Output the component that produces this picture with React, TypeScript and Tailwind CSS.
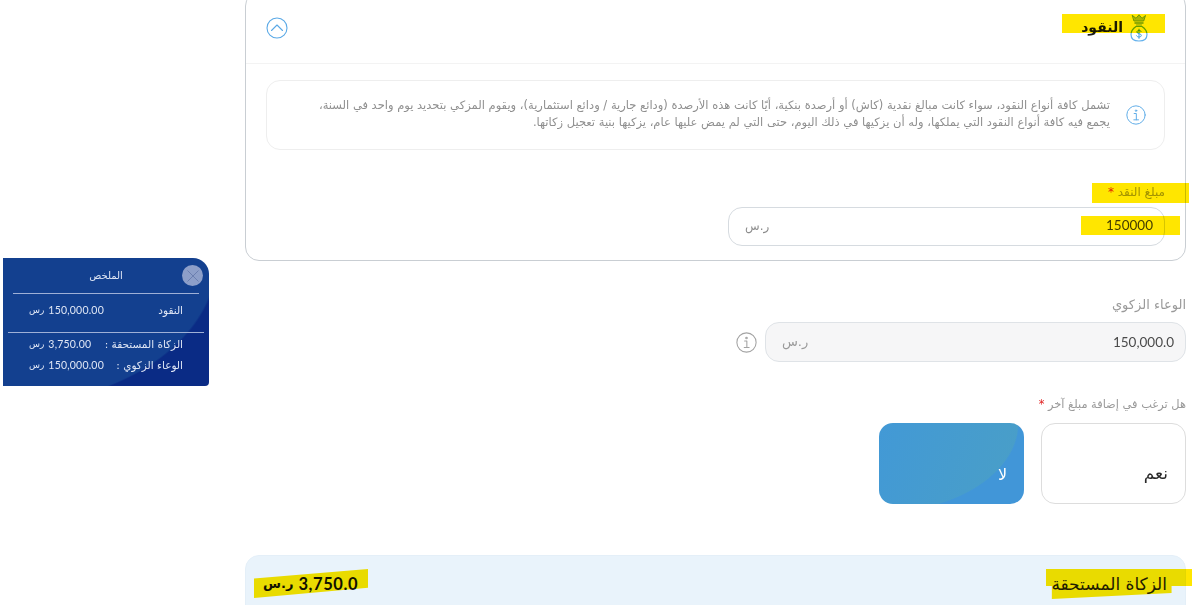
import React from "react";

const font = { fontFamily: '"DejaVu Sans", "Noto Sans", sans-serif' };

function InfoIcon({ color, size }: { color: string; size: number }) {
  return (
    <svg width={size} height={size} viewBox="0 0 24 24" fill="none" stroke={color} strokeWidth="1.2" strokeLinecap="round" strokeLinejoin="round" className="shrink-0">
      <circle cx="12" cy="12" r="11" />
      <circle cx="12" cy="6.8" r="0.9" />
      <path d="M9.8 10.2h2.6v7.6M9.4 17.8h5.6" />
    </svg>
  );
}

function BagIcon() {
  return (
    <svg width="20" height="28" viewBox="0 0 20 28" fill="none" strokeLinecap="round" strokeLinejoin="round" className="shrink-0">
      <path d="M3.500 1.500l3.500 2.800L10 .8l3 3.500 3.500-2.800-1.800 5.500H5.300z" fill="#a9c93c" stroke="#6ea81a" strokeWidth="1" />
      <path d="M6 9h8" stroke="#6ea81a" strokeWidth="1.500" />
      <path d="M7.500 11h5" stroke="#6ea81a" strokeWidth="1.200" />
      <path d="M7 12.500C4 14.500 2 17.500 2 20.500c0 4 3 6.500 8 6.500s8-2.500 8-6.500c0-3-2-6-5-8z" stroke="#62b0ec" strokeWidth="1.200" fill="#fff" fillOpacity="0.6" />
      <path d="M12.200 17.600c-.5-.8-1.200-1.100-2.200-1.100-1.200 0-2.100.6-2.100 1.500 0 2.300 4.400 1.100 4.400 3.400 0 1-.9 1.600-2.300 1.600-1.100 0-2-.4-2.400-1.200M10 15.200v9.200" stroke="#3f9de0" strokeWidth="1" />
    </svg>
  );
}

function Mark({ className }: { className: string }) {
  return <div className={"absolute bg-[#ffe600] mix-blend-multiply pointer-events-none " + className} />;
}

function SummaryRow({ label, value, className }: { label: string; value: string; className?: string }) {
  return (
    <div className={"flex justify-between items-center px-[26px] " + (className ?? "")}>
      <span>{label}</span>
      <span className="flex items-center gap-1" dir="ltr">
        <span className="text-[9px]">رس</span>
        <span className="font-['Lato'] text-[10.5px] tracking-[0.2px]">{value}</span>
      </span>
    </div>
  );
}

function Summary() {
  return (
    <aside dir="rtl" className="absolute left-[3px] top-[258px] w-[206px] h-[128px] rounded-tr-[16px] rounded-br-[4px] text-[#dfe6f5] text-[10.5px] bg-[radial-gradient(215px_148px_at_0_0,#13408f_99%,#0a2b85_100%)]">
      <div className="absolute left-[179px] top-[7px] size-[21px] rounded-full bg-[#8d9fc9] flex items-center justify-center">
        <svg width="14" height="14" viewBox="0 0 14 14" stroke="#6b7fb0" strokeWidth="1" fill="none"><path d="M1.500 1.500l11 11M12.500 1.500l-11 11" /></svg>
      </div>
      <div className="h-[36px] mx-[10px] border-b border-[#9fb0d6] flex items-center justify-center text-[10px]">الملخص</div>
      <SummaryRow label="النقود" value="150,000.00" className="h-[38px] pb-[4px]" />
      <div className="mx-[5px] border-t border-[#9fb0d6]" />
      <SummaryRow label="الزكاة المستحقة  :" value="3,750.00" className="h-[22px] pt-[2px]" />
      <SummaryRow label="الوعاء الزكوي  :" value="150,000.00" className="h-[20px] pt-[2px]" />
    </aside>
  );
}

export default function App() {
  return (
    <div className="relative w-[1200px] h-[605px] overflow-hidden bg-white" style={font}>
      <Summary />
      <main dir="rtl" className="ml-[245px] w-[941px] -mt-[8px]">
        <section className="h-[269px] border border-[#c9ced3] rounded-[14px]">
          <header className="relative h-[71px] border-b border-[#f3f3f3] flex items-center justify-between pr-[38px] pl-[20px]">
            <div className="flex items-center gap-[6px] -mr-[2px]">
              <BagIcon />
              <span className="text-[14px] font-bold text-[#1b1b1b] -mt-[1px]">النقود</span>
            </div>
            <svg width="22" height="22" viewBox="0 0 22 22" fill="none" stroke="#5aa9e6" strokeWidth="1.100" strokeLinecap="round" strokeLinejoin="round">
              <circle cx="11" cy="11" r="10" />
              <path d="M5.500 13.500L11 8l5.500 5.500" />
            </svg>
            <Mark className="right-[20px] top-[21px] w-[103px] h-[19px]" />
          </header>
          <div className="mx-[20px] mt-[16px] h-[70px] border border-[#eeeeee] rounded-[14px] flex items-center gap-[16px] pr-[18px]">
            <InfoIcon color="#62aee8" size={20} />
            <p className="pb-[3px] text-[11.5px] leading-[17px] text-[#8f8f8f] whitespace-nowrap">
              تشمل كافة أنواع النقود، سواء كانت مبالغ نقدية (كاش) أو أرصدة بنكية، أيًا كانت هذه الأرصدة (ودائع جارية / ودائع استثمارية)، ويقوم المزكي بتحديد يوم واحد في السنة،
              <br />
              يجمع فيه كافة أنواع النقود التي يملكها، وله أن يزكيها في ذلك اليوم، حتى التي لم يمض عليها عام، يزكيها بنية تعجيل زكاتها.
            </p>
          </div>
          <div className="relative mx-[20px] mt-[34px] text-[12px] leading-[16px] text-[#a3a3a3]">
            مبلغ النقد <span className="text-[#e02424]">*</span>
            <Mark className="-right-[24px] -top-[1px] w-[97px] h-[20px]" />
          </div>
          <div className="relative mx-[20px] mt-[7px] w-[437px] h-[39px] border border-[#d6dbe0] rounded-[14px] flex items-center justify-between px-[11px] pb-[2px]">
            <span className="font-['Lato'] text-[13.5px] text-[#444]">150000</span>
            <span className="text-[12px] text-[#8c8c8c] pl-[5px]">ر.س</span>
            <Mark className="-right-[16px] top-[8px] w-[99px] h-[19px]" />
          </div>
        </section>

        <label className="block mt-[35px] text-[13px] leading-[18px] text-[#9a9a9a]">الوعاء الزكوي</label>
        <div className="mt-[8px] flex items-center gap-[8px]">
          <div className="w-[421px] h-[40px] bg-[#f6f6f7] border border-[#dfe3e7] rounded-[14px] flex items-center justify-between px-[11px]">
            <span className="font-['Lato'] text-[13.5px] text-[#4a4a4a]">150,000.0</span>
            <span className="text-[13px] text-[#9a9a9a] pl-[5px]">ر.س</span>
          </div>
          <InfoIcon color="#a3a3a3" size={21} />
        </div>

        <label className="block mt-[33px] text-[11.4px] leading-[18px] text-[#9a9a9a]">
          هل ترغب في إضافة مبلغ آخر <span className="text-[#e02424]">*</span>
        </label>
        <div className="mt-[10px] flex gap-[17px]">
          <button className="w-[145px] h-[81px] border border-[#dddddd] rounded-[14px] bg-white flex items-end pr-[17px] pb-[17px] text-[17px] text-[#2a2a2a]">نعم</button>
          <button className="w-[145px] h-[81px] rounded-[14px] flex items-end pr-[17px] pb-[17px] text-[16px] text-white bg-[radial-gradient(140px_90px_at_0_0,transparent_99%,#4196d8_100%),linear-gradient(110deg,#4299d6,#4a9fc6)]">لا</button>
        </div>

        <section className="relative mt-[51px] h-[70px] bg-[#e9f3fb] rounded-[14px] border border-[#e4eff8] flex items-start justify-between px-[8px] pt-[16px]">
          <span className="pr-[10px] text-[17px] leading-[24px] text-[#222]">الزكاة المستحقة</span>
          <span dir="ltr" className="flex items-center gap-[5px] pl-[9px] font-bold text-[#111] leading-[24px]">
            <span className="text-[13px]">ر.س</span>
            <span className="font-['Lato'] text-[16.5px] tracking-[0.6px]">3,750.0</span>
          </span>
          <Mark className="-right-[7px] top-[13px] w-[146px] h-[30px] [clip-path:polygon(0_0,100%_0,100%_57%,86%_57%,86%_80%,4%_100%,4%_57%,0_57%)]" />
          <Mark className="left-[8px] top-[13px] w-[114px] h-[29px] [clip-path:polygon(0_33%,100%_0,100%_65%,0_100%)]" />
        </section>
      </main>
    </div>
  );
}
